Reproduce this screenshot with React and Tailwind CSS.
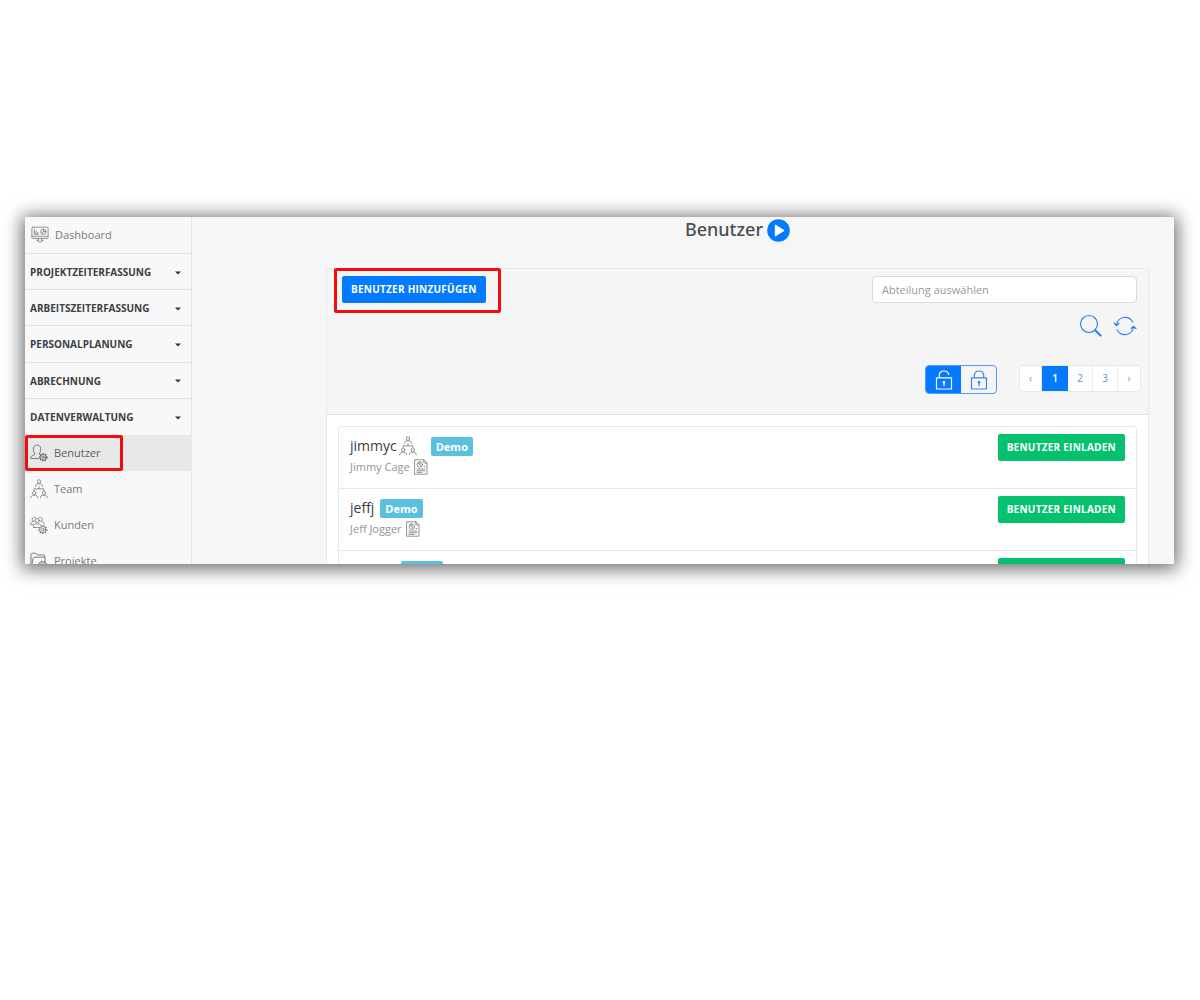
import React from "react";

const line = { fill: "none", stroke: "currentColor", strokeLinecap: "round", strokeLinejoin: "round" };

function Gear({ cx, cy, r = 3 }) {
  return (
    <g>
      <circle cx={cx} cy={cy} r={r + 0.6} strokeWidth="1.2" strokeDasharray="1.5 1.1" strokeLinecap="butt" />
      <circle cx={cx} cy={cy} r={r - 0.2} strokeWidth="0.8" />
      <circle cx={cx} cy={cy} r={r - 1.9} strokeWidth="0.8" />
    </g>
  );
}

function DashboardIcon() {
  return (
    <svg width="18" height="18" viewBox="0 0 18 18" {...line} strokeWidth="0.8" aria-hidden="true">
      <rect x="0.9" y="1.2" width="16.2" height="11.2" rx="0.8" />
      <path d="M1 10.3h16M7.3 12.5v1.6M10.7 12.5v1.6M5.6 14.3h1.8v1.2c1 .7 2.2.7 3.2 0v-1.2h1.8" />
      <path d="M3.3 3.3v5h4M5 5v3M6.800 6.300V8" />
      <circle cx="12.300" cy="5.800" r="2.700" />
      <path d="M12.300 5.800V3.200M12.300 5.800l2.500-.6M12.300 5.800l-1.700 2" />
    </svg>
  );
}

function UserGearIcon() {
  return (
    <svg width="18" height="18" viewBox="0 0 18 18" {...line} strokeWidth="0.8" aria-hidden="true">
      <path d="M4.600 9.500C3.200 7.900 3.200 5.500 3.400 4.200 3.700 2.100 5.100 1 7 1s3.300 1.100 3.600 3.200c.2 1.300.2 3.700-1.200 5.300" />
      <path d="M4.600 9.500c.2 1.200-.4 1.500-1.600 1.900-1.700.5-2.300 1.200-2.300 3.100h8.300M9.400 9.500c0 .9.200 1.200.8 1.500" />
      <Gear cx={13.300} cy={13.300} />
    </svg>
  );
}

function PersonA({ x, y }) {
  return (
    <g>
      <ellipse cx={x} cy={y + 1.700} rx="1.600" ry="1.900" />
      <path d={`M${x - 3.500} ${y + 6.600}c.1-1.500.9-2.300 2.600-2.800l.9.9.9-.9c1.700.5 2.500 1.300 2.600 2.800`} />
    </g>
  );
}

function TeamIcon() {
  return (
    <svg width="18" height="20" viewBox="0 0 18 20" {...line} strokeWidth="0.8" aria-hidden="true">
      <PersonA x={9} y={0.800} />
      <PersonA x={4.200} y={12.200} />
      <PersonA x={13.800} y={12.200} />
      <path d="M9 7.600v2.200M4.200 11.500V9.800h9.600v1.700" />
    </svg>
  );
}

function CustomersIcon() {
  return (
    <svg width="18" height="18" viewBox="0 0 18 18" {...line} strokeWidth="0.8" aria-hidden="true">
      <circle cx="7.300" cy="4.600" r="2" />
      <path d="M3.500 11.500V10c.2-1.500 1.400-2 2.700-2.500l1.100 1 1.100-1c1 .3 2 .8 2.500 1.600M3.500 11.500h4.800" />
      <path d="M5 4.800C3.800 6 2.200 5.200 2.200 3.500 2.200.8 5.500.6 6 2.200M9.600 4.800c1.200 1.200 2.800.4 2.800-1.300 0-2.700-3.300-2.900-3.800-1.300M2.800 5.500C1.200 6 .6 6.800.6 8.600h2.600M11.800 5.500c1.600.5 2.100 1.200 2.200 2.500" />
      <Gear cx={12.800} cy={13.500} r={3.300} />
    </svg>
  );
}

function ProjectsIcon() {
  return (
    <svg width="18" height="18" viewBox="0 0 18 18" {...line} strokeWidth="1" aria-hidden="true">
      <path d="M8 16H1V2.500C1 1.700 1.500 1.200 2.300 1.200h3.400l1.400 1.700h6.300c.8 0 1.300.5 1.300 1.300v1H4.300c-.7 0-1 .3-1.200 1L1.200 16M14.700 5.200h.4v5" />
      <Gear cx={12.500} cy={13} r={3.200} />
    </svg>
  );
}

function DocumentIcon() {
  return (
    <svg width="14" height="16" viewBox="0 0 14 16" {...line} strokeWidth="0.8" aria-hidden="true">
      <path d="M1 .8h8.800L13 3.900v11.300H1zM9.800.8v3.100H13" />
      <circle cx="5.800" cy="5.600" r="2.700" />
      <path d="M4.600 4.300l1.200 1.500V3M5.800 5.800L7.500 7M3 10h8M3 11.800h8M3 13.400h5M10 7.500h1" />
    </svg>
  );
}

function SearchIcon() {
  return (
    <svg width="24" height="24" viewBox="0 0 24 24" {...line} strokeWidth="1.200" aria-hidden="true">
      <circle cx="10" cy="10" r="8.500" />
      <path d="M16 16l1.300 1.300" />
      <path d="M17.200 17.200l4.400 4.300" strokeWidth="2.200" />
    </svg>
  );
}

function RefreshIcon() {
  return (
    <svg width="24" height="24" viewBox="0 0 24 24" {...line} strokeWidth="1.100" aria-hidden="true">
      <path d="M3.500 11.200A8.600 8.600 0 0 1 19.800 8.300M20.500 12.800A8.600 8.600 0 0 1 4.200 15.700" />
      <path d="M1.300 9.200l2.200 2.300 2.300-2M22.800 14.600l-2.200-2.200-2.300 2" strokeWidth="1.400" />
    </svg>
  );
}

function LockIcon({ open }) {
  return (
    <svg width="18" height="20" viewBox="0 0 18 20" {...line} strokeWidth="1.200" aria-hidden="true">
      <rect x="1.500" y="7.800" width="15" height="11.200" rx="0.3" />
      <path d={open ? "M4.300 7.500V5C4.300 2.500 6.300 1 9 1c2.600 0 4.300 1.200 4.700 3.400" : "M4.300 7.500V5.500C4.300 2.600 6.300 1 9 1s4.700 1.600 4.700 4.500v2"} />
      <circle cx="9" cy="12.300" r="0.8" fill="currentColor" />
      <path d="M9 12.500v3.200" />
    </svg>
  );
}

function PlayIcon() {
  return (
    <svg width="23" height="23" viewBox="0 0 23 23" aria-hidden="true">
      <circle cx="11.500" cy="11.500" r="11.300" fill="#047bfe" />
      <path d="M8.300 6l8.800 5.500-8.800 5.500z" fill="#fff" stroke="#fff" strokeWidth="1" strokeLinejoin="round" />
    </svg>
  );
}

const groups = ["PROJEKTZEITERFASSUNG", "ARBEITSZEITERFASSUNG", "PERSONALPLANUNG", "ABRECHNUNG", "DATENVERWALTUNG"];

const entries = [
  { label: "Benutzer", Icon: UserGearIcon, active: true },
  { label: "Team", Icon: TeamIcon },
  { label: "Kunden", Icon: CustomersIcon },
  { label: "Projekte", Icon: ProjectsIcon },
];

const users = [
  { login: "jimmyc", name: "Jimmy Cage", team: true },
  { login: "jeffj", name: "Jeff Jogger" },
  { login: "marcel" },
];

function Sidebar() {
  return (
    <nav className="w-[167px] shrink-0 border-r border-[#e7e7e7] bg-[#f8f8f8] text-[11px] text-[#777b7d]">
      <a href="#dashboard" className="flex h-[37px] items-center gap-1.5 border-b border-[#e2e2e2] pl-1.5">
        <DashboardIcon />
        Dashboard
      </a>
      <div className="grid h-[181px] grid-rows-5">
        {groups.map((g) => (
          <button key={g} type="button" className="flex items-center justify-between border-b border-[#e2e2e2] pt-0.5 pr-2.5 pl-[5px] text-[10px] font-bold text-[#3c4043] last:border-b-0">
            {g}
            <svg width="6" height="4" viewBox="0 0 6 4" aria-hidden="true"><path d="M0 .5h6L3 3.500z" fill="#333" /></svg>
          </button>
        ))}
      </div>
      {entries.map(({ label, Icon, active }) => (
        <a key={label} href={"#" + label.toLowerCase()} className={active ? "relative flex h-9 items-center gap-1.5 bg-[#e8e8e8] pl-[5px] text-[#5a5e61]" : "flex h-9 items-center gap-1.5 pl-[5px]"}>
          <Icon />
          {label}
          {active && <span className="absolute inset-y-0 left-0 w-[98px] rounded-xs border-3 border-[#f50a12]" />}
        </a>
      ))}
    </nav>
  );
}

function Pagination() {
  const cell = "grid h-full place-items-center border-r border-[#ececec] last:border-r-0";
  return (
    <div className="flex h-[27px] overflow-hidden rounded-sm border border-[#e8e8e8] bg-white text-[10px] text-[#6a92bd]">
      <button type="button" aria-label="Zurück" className={cell + " w-[22px]"}>‹</button>
      <button type="button" className="w-[26px] bg-[#047bfe] font-semibold text-white">1</button>
      <button type="button" className={cell + " w-[25px]"}>2</button>
      <button type="button" className={cell + " w-[25px]"}>3</button>
      <button type="button" aria-label="Weiter" className={cell + " w-[22px]"}>›</button>
    </div>
  );
}

function UserRow({ login, name, team }) {
  return (
    <li className="flex h-[62px] items-start justify-between border-b border-[#e6e6e6] pt-[7px] pr-[11px] pl-[11px]">
      <div>
        <div className="flex h-6 items-center">
          <span className="text-sm text-[#3a3e42]">{login}</span>
          {team && <span className="mr-2 ml-0.5 text-[#777]"><TeamIcon /></span>}
          <span className="ml-1.5 rounded-xs bg-[#5bc0de] px-[5px] text-[11px] leading-[19px] font-bold text-white">Demo</span>
        </div>
        {name && (
          <div className="flex h-[18px] items-center gap-1 text-[11px] text-[#92969a]">
            {name}
            <span className="text-[#777]"><DocumentIcon /></span>
          </div>
        )}
      </div>
      <button type="button" className="h-[27px] rounded-xs bg-[#05c16e] px-[9px] text-[10px] font-bold tracking-wide whitespace-nowrap text-white">BENUTZER EINLADEN</button>
    </li>
  );
}

export default function App() {
  return (
    <div className="min-h-screen bg-white pt-[217px] pr-[26px] pl-[25px] font-['Open_Sans','Noto_Sans',sans-serif]">
      <div className="flex h-[347px] overflow-hidden bg-[#f6f6f6] shadow-[0_2px_17px_3px_rgba(0,0,0,0.58)]">
        <Sidebar />
        <main className="min-w-0 flex-1 pr-[25px] pl-[134px]">
          <header className="flex h-[51px] items-start justify-center gap-1">
            <h1 className="font-['Noto_Sans',sans-serif] text-lg leading-6 font-medium text-[#4a4e52]">Benutzer</h1>
            <button type="button" aria-label="Video abspielen" className="mt-0.5"><PlayIcon /></button>
          </header>
          <section className="border border-[#e9e9e9] bg-white">
            <div className="flex h-[146px] items-start justify-between border-b border-[#e2e2e2] bg-[#f5f5f5] pt-[7px] pr-[11px] pl-[15px]">
              <div className="relative flex">
                <button type="button" className="h-[27px] rounded-xs bg-[#047bfe] px-[9px] text-[10px] font-bold tracking-wide whitespace-nowrap text-white">BENUTZER HINZUFÜGEN</button>
                <span className="pointer-events-none absolute -top-2 -right-[15px] -bottom-2.5 -left-2 rounded-xs border-3 border-[#f50a12]" />
              </div>
              <div className="flex flex-col items-end">
                <input type="text" aria-label="Abteilung auswählen" placeholder="Abteilung auswählen" className="h-[27px] w-[265px] rounded-sm border border-[#d9d9d9] bg-white px-[9px] text-[11px] placeholder:text-[#9a9a9a]" />
                <div className="mt-[11px] flex gap-2.5 text-[#2f83ee]">
                  <button type="button" aria-label="Suchen"><SearchIcon /></button>
                  <button type="button" aria-label="Aktualisieren"><RefreshIcon /></button>
                </div>
                <div className="mt-[27px] -mr-1 flex gap-[22px]">
                  <div className="flex h-[29px] w-[72px] overflow-hidden rounded-sm border border-[#4f9df8]">
                    <button type="button" aria-label="Entsperrt" className="grid flex-1 place-items-center bg-[#047bfe] text-white"><LockIcon open /></button>
                    <button type="button" aria-label="Gesperrt" className="grid flex-1 place-items-center text-[#3186ee]"><LockIcon /></button>
                  </div>
                  <Pagination />
                </div>
              </div>
            </div>
            <ul className="mx-[11px] mt-[11px] rounded-sm border border-[#e9e9e9]">
              {users.map((u) => <UserRow key={u.login} {...u} />)}
            </ul>
          </section>
        </main>
      </div>
    </div>
  );
}
